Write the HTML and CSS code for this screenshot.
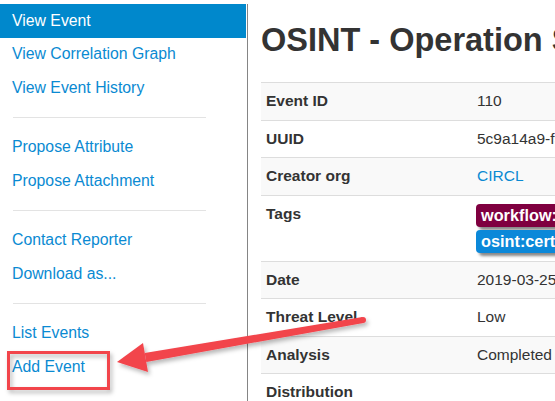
FILE: index.html
```html
<!DOCTYPE html>
<html>
<head>
<meta charset="utf-8">
<link rel="stylesheet" href="styles.css">
</head>
<body>
<div class="page">
  <nav class="sidebar">
    <ul class="nav-list">
      <li class="active"><a href="#">View Event</a></li>
      <li><a href="#">View Correlation Graph</a></li>
      <li><a href="#">View Event History</a></li>
      <li class="divider"></li>
      <li><a href="#">Propose Attribute</a></li>
      <li><a href="#">Propose Attachment</a></li>
      <li class="divider"></li>
      <li><a href="#">Contact Reporter</a></li>
      <li><a href="#">Download as...</a></li>
      <li class="divider"></li>
      <li><a href="#">List Events</a></li>
      <li><a href="#">Add Event</a></li>
    </ul>
  </nav>
  <main class="main">
    <h2 class="title">OSINT - Operation Sharpshooter</h2>
    <table class="meta">
      <tr><th>Event ID</th><td>110</td></tr>
      <tr><th>UUID</th><td>5c9a14a9-f5c8-4f6d-9a5a-4c1a950d210f</td></tr>
      <tr><th>Creator org</th><td><a href="#">CIRCL</a></td></tr>
      <tr><th>Tags</th><td>
        <div class="tags">
          <span class="tag tag-workflow">workflow:state="complete"</span>
          <span class="tag tag-osint">osint:certainty="50"</span>
        </div>
      </td></tr>
      <tr><th>Date</th><td>2019-03-25</td></tr>
      <tr><th>Threat Level</th><td>Low</td></tr>
      <tr><th>Analysis</th><td>Completed</td></tr>
      <tr><th>Distribution</th><td></td></tr>
    </table>
  </main>
</div>
<svg class="annotation" width="555" height="401" viewBox="0 0 555 401">
  <defs>
    <filter id="shadow" x="-10%" y="-30%" width="130%" height="160%">
      <feDropShadow dx="2" dy="3" stdDeviation="2" flood-color="#000" flood-opacity="0.28"/>
    </filter>
  </defs>
  <g filter="url(#shadow)" fill="#f2444c">
    <rect x="8.5" y="352.5" width="100" height="36" fill="none" stroke="#f2444c" stroke-width="3"/>
    <polygon points="362.5,317 363.5,323 146.3,361.9 144.7,353.1"/>
    <circle cx="363" cy="320" r="3"/>
    <polygon points="117,362 143,343 148,372"/>
  </g>
</svg>
</body>
</html>
```
FILE: styles.css
```css
html, body {
  margin: 0;
  padding: 0;
  background: #fff;
}
body {
  font-family: "Liberation Sans", Arial, sans-serif;
  font-size: 15.5px;
  color: #333;
  width: 555px;
  height: 401px;
  overflow: hidden;
  position: relative;
}
.page {
  display: flex;
  height: 401px;
}
.sidebar {
  width: 247px;
  flex: none;
  margin-top: 4px;
  border-right: 1px solid #858585;
}
.nav-list {
  list-style: none;
  margin: 0 1px 0 0;
  padding: 0;
}
.nav-list a {
  display: block;
  padding: 6.75px 12px;
  line-height: 20px;
  font-size: 15.8px;
  color: #0a8ad2;
  text-decoration: none;
}
.nav-list .active a {
  background: #0088cc;
  color: #fff;
}
.nav-list .divider {
  height: 1px;
  width: 193px;
  margin: 12.5px 0 12.5px 13px;
  background: #e3e3e3;
}
.main {
  flex: 1;
  min-width: 0;
  overflow: hidden;
  padding-left: 13px;
}
.title {
  margin: 20px 0 22px 0;
  font-size: 32.5px;
  line-height: 40px;
  font-weight: bold;
  color: #333;
  white-space: nowrap;
}
.meta {
  border-collapse: collapse;
  width: 520px;
  table-layout: fixed;
}
.meta th, .meta td {
  text-align: left;
  vertical-align: top;
  padding: 8px 5px;
  line-height: 20.5px;
  border-top: 1px solid #dddddd;
  white-space: nowrap;
  overflow: hidden;
}
.meta th {
  width: 201px;
  font-weight: bold;
  color: #333;
}
.meta tr:nth-child(odd) th,
.meta tr:nth-child(odd) td {
  background: #f9f9f9;
}
.meta a {
  color: #0a8ad2;
  text-decoration: none;
}
.tags {
  display: flex;
  flex-direction: column;
  align-items: flex-start;
  gap: 3px;
  margin-left: -1px;
}
.tag {
  display: inline-block;
  color: #fff;
  font-weight: bold;
  font-size: 16.3px;
  padding: 1px 5px;
  line-height: 21px;
  border-radius: 4px;
  box-shadow: 3px 3px 3px #888;
}
.tag-workflow {
  background: #7f0040;
}
.tag-osint {
  background: #0b88d9;
}
.annotation {
  position: absolute;
  left: 0;
  top: 0;
  pointer-events: none;
}
```
